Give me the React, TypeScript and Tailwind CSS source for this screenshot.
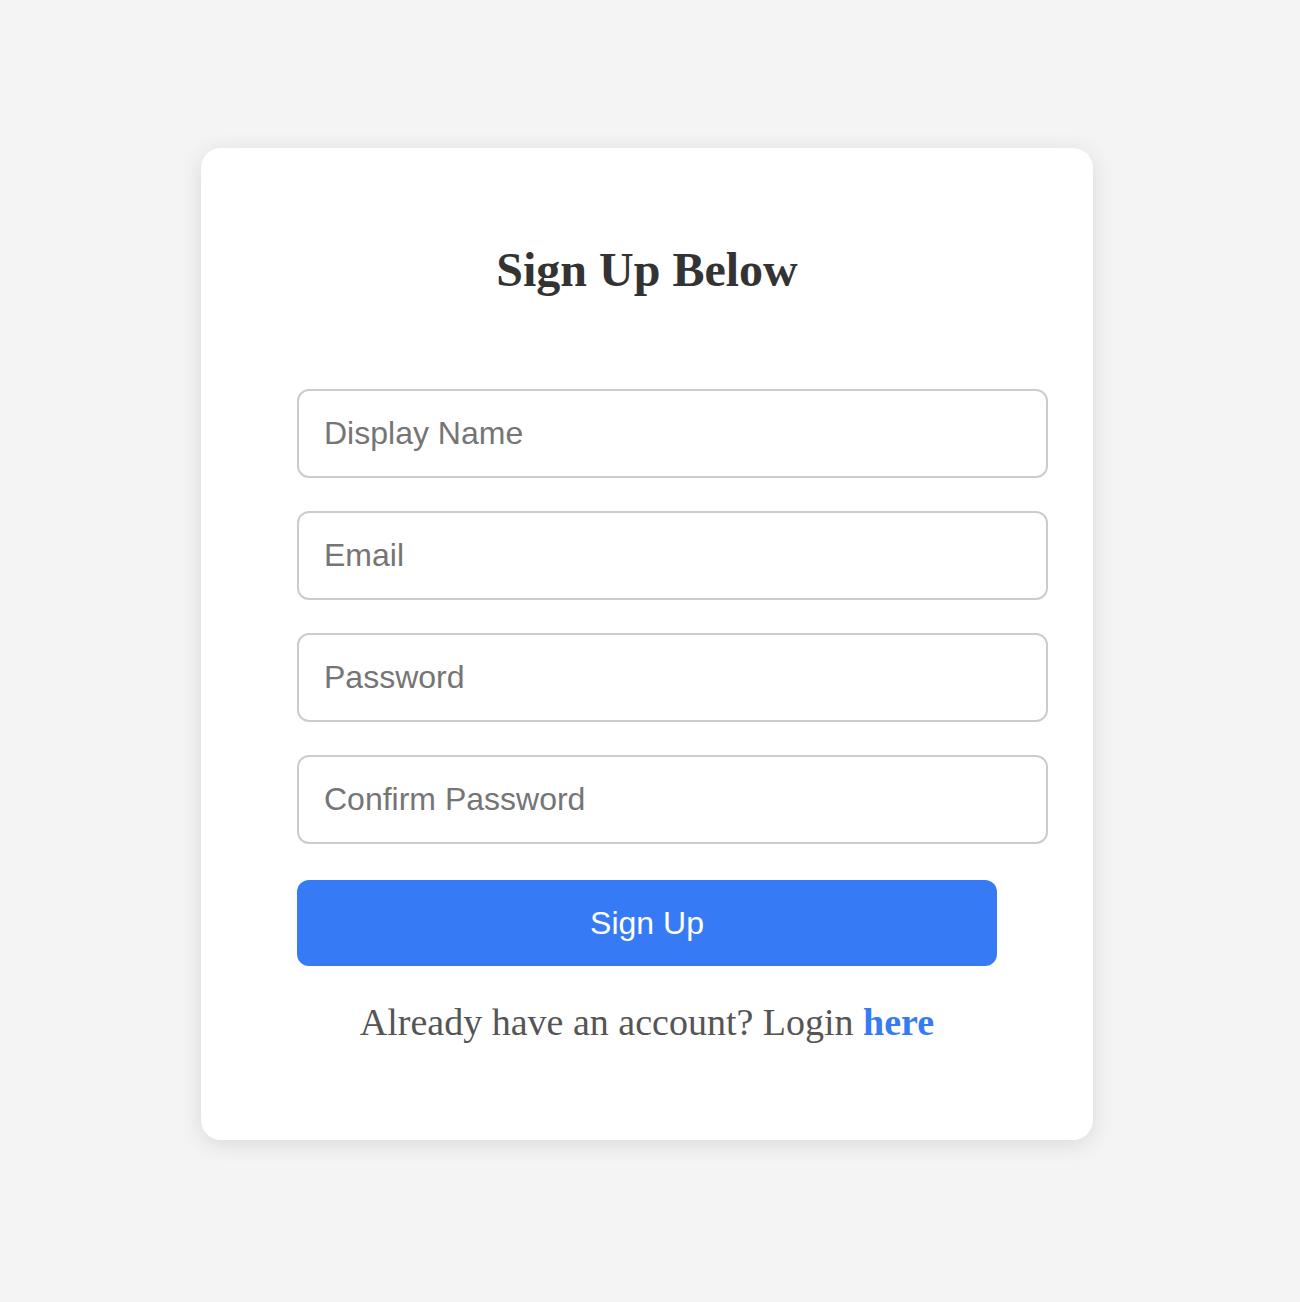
import React from 'react';

const fields = ['Display Name', 'Email', 'Password', 'Confirm Password'];

const App = () => {
  return (
    <div className="min-h-[1302px] bg-[#f4f4f4] pt-[148px] pb-[162px]">
      <div className="ml-[201px] w-[892px] rounded-[20px] bg-white px-[96px] pt-[96px] pb-[98px] shadow-[0_4px_22px_rgba(0,0,0,0.11)]">
        <h2 className="text-center font-['Liberation_Serif',serif] text-[48px] font-bold leading-[52px] text-[#333]">
          Sign Up Below
        </h2>
        <form className="mt-[93px] flex flex-col" onSubmit={(e) => e.preventDefault()}>
          <div className="flex flex-col gap-[33px]">
            {fields.map((f) => (
              <input
                key={f}
                type={f.includes('Password') ? 'password' : 'text'}
                placeholder={f}
                className="h-[89px] w-[751px] rounded-[12px] border-2 border-[#cccccc] bg-white px-[25px] font-['Liberation_Sans',sans-serif] text-[32px] text-[#333] outline-none placeholder:text-[#757575]"
              />
            ))}
          </div>
          <button
            type="submit"
            className="mt-[36px] h-[86px] w-[700px] rounded-[12px] bg-[#367bf5] font-['Liberation_Sans',sans-serif] text-[32px] text-white"
          >
            Sign Up
          </button>
        </form>
        <p className="mt-[36px] text-center font-['Liberation_Serif',serif] text-[38px] leading-[40px] text-[#555]">
          Already have an account? Login <a href="#" className="font-bold text-[#367bf5]">here</a>
        </p>
      </div>
    </div>
  );
};

export default App;
